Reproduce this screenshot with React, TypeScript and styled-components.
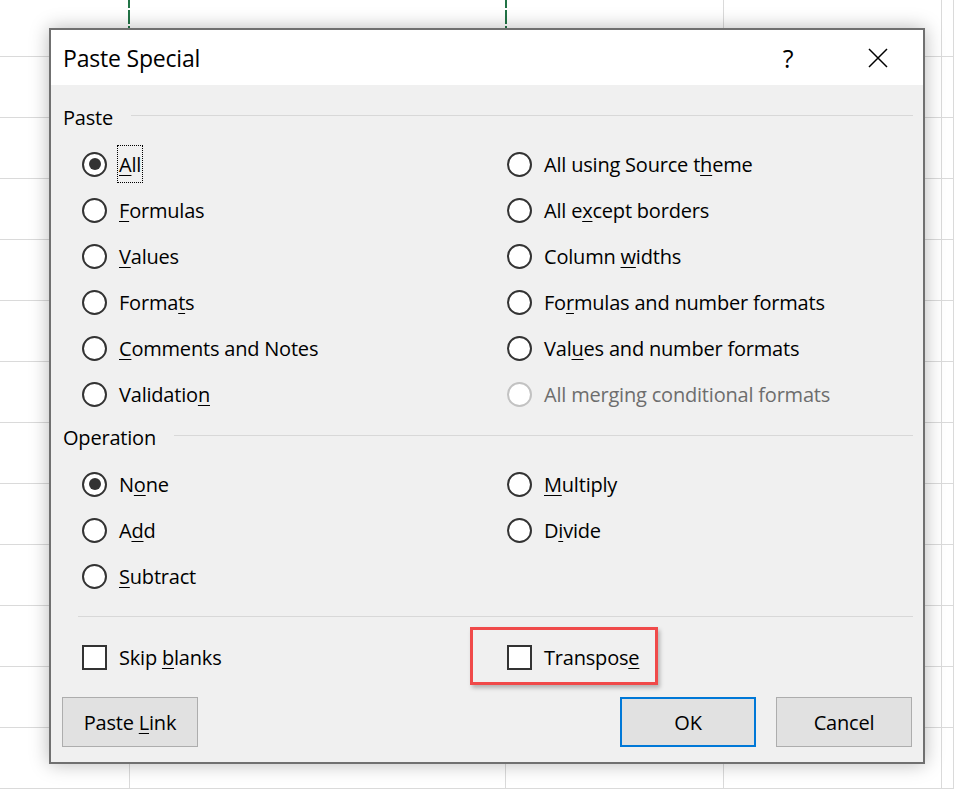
import React from "react";
import styled, { createGlobalStyle } from "styled-components";

const GlobalStyle = createGlobalStyle`
  html, body {
    margin: 0;
    padding: 0;
    background: #fff;
  }
  body {
    font-family: "Open Sans", "Noto Sans", sans-serif;
    letter-spacing: -0.2px;
    color: #000;
  }
`;

// spreadsheet behind the dialog
const Screen = styled.div`
  position: relative;
  width: 954px;
  height: 790px;
  overflow: hidden;
  background: #fff;
`;

const Sheet = styled.div`
  display: grid;
  grid-template-columns: 130px 376px 218px 218px 1fr;
  grid-template-rows: 57px;
  grid-auto-rows: 61px;
`;

const Cell = styled.div`
  box-sizing: border-box;
  border-right: 1px solid #dadada;
  border-bottom: 1px solid #dadada;
`;

const CopyMarquee = styled.div`
  position: absolute;
  left: 128px;
  top: -4px;
  width: 379px;
  height: 320px;
  box-sizing: border-box;
  border-left: 2px solid transparent;
  border-right: 2px solid transparent;
  border-image: repeating-linear-gradient(
      to bottom,
      #217346 0 14px,
      #fff 14px 16px
    )
    2;
`;

// dialog
const Dialog = styled.div`
  position: absolute;
  left: 49px;
  top: 28px;
  width: 876px;
  height: 736px;
  box-sizing: border-box;
  border: 2px solid #707070;
  background: #f0f0f0;
  box-shadow: 0 0 18px rgba(0, 0, 0, 0.28);
  display: flex;
  flex-direction: column;
`;

const TitleBar = styled.div`
  height: 55px;
  flex: none;
  background: #fff;
  display: flex;
  align-items: center;
  padding-left: 12px;
`;

const Title = styled.div`
  font-size: 23px;
  flex: 1;
`;

const TitleButton = styled.div`
  width: 90px;
  height: 55px;
  display: flex;
  align-items: center;
  justify-content: center;
  font-size: 25px;
`;

const Body = styled.div`
  flex: 1;
  display: flex;
  flex-direction: column;
  padding: 18px 10px 16px 12px;
`;

const SectionHeader = styled.div<{ $gapBefore?: number }>`
  height: 28px;
  display: flex;
  align-items: center;
  gap: 18px;
  font-size: 20px;
  margin: ${p => p.$gapBefore ?? 0}px 0 10px;

  &::after {
    content: "";
    flex: 1;
    height: 1px;
    margin-top: -3px;
    background: #d8d8d8;
  }
`;

const OptionGrid = styled.div`
  display: grid;
  grid-template-columns: 425px 1fr;
  grid-auto-rows: 46px;
  margin-left: 19px;
`;

const Option = styled.div<{ $disabled?: boolean }>`
  position: relative;
  display: flex;
  align-items: center;
  gap: 12px;
  font-size: 20px;
  color: ${p => (p.$disabled ? "#6d6d6d" : "#000")};
`;

const RadioCircle = styled.span<{ $checked?: boolean; $disabled?: boolean }>`
  box-sizing: border-box;
  width: 25px;
  height: 25px;
  flex: none;
  border-radius: 50%;
  border: 2px solid ${p => (p.$disabled ? "#c2c2c2" : "#333")};
  background: #fff;
  display: flex;
  align-items: center;
  justify-content: center;

  &::after {
    content: "";
    display: ${p => (p.$checked ? "block" : "none")};
    width: 12px;
    height: 12px;
    border-radius: 50%;
    background: #333;
  }
`;

const CheckBox = styled.span`
  box-sizing: border-box;
  width: 25px;
  height: 25px;
  flex: none;
  border: 2px solid #333;
  background: #fff;
`;

const Label = styled.span<{ $focused?: boolean }>`
  line-height: 28px;
  padding: 5px 1px 3px;
  margin-left: -2px;
  border: 1px dotted ${p => (p.$focused ? "#000" : "transparent")};
`;

const Key = styled.u`
  text-decoration-thickness: 1px;
  text-underline-offset: 3px;
`;

const Separator = styled.div`
  height: 1px;
  background: #d8d8d8;
  margin: 17px 0 17px 15px;
`;

const Highlight = styled.div`
  position: absolute;
  left: -37px;
  top: -7px;
  width: 188px;
  height: 58px;
  box-sizing: border-box;
  border: 3px solid #f04a4a;
  box-shadow: 2px 3px 4px rgba(0, 0, 0, 0.25);
  pointer-events: none;
`;

const ButtonRow = styled.div`
  display: flex;
  gap: 20px;
  margin: 17px 1px 0 -1px;
`;

const Spacer = styled.div`
  flex: 1;
`;

const Button = styled.button<{ $default?: boolean }>`
  width: 136px;
  height: 50px;
  box-sizing: border-box;
  padding: 0;
  background: #e1e1e1;
  border: ${p => (p.$default ? "2px solid #0078d7" : "1px solid #adadad")};
  font-family: inherit;
  letter-spacing: inherit;
  font-size: 20px;
  color: #000;
`;

// "&" marks the access key, as in a Windows resource string
const AccessText = ({ text }: { text: string }) => {
  const i = text.indexOf("&");
  if (i < 0) return <>{text}</>;
  return (
    <>
      {text.slice(0, i)}
      <Key>{text[i + 1]}</Key>
      {text.slice(i + 2)}
    </>
  );
};

type RadioItem = {
  text: string;
  checked?: boolean;
  disabled?: boolean;
  focused?: boolean;
};

const pasteOptions: RadioItem[] = [
  { text: "&All", checked: true, focused: true },
  { text: "All using Source t&heme" },
  { text: "&Formulas" },
  { text: "All e&xcept borders" },
  { text: "&Values" },
  { text: "Column &widths" },
  { text: "Forma&ts" },
  { text: "Fo&rmulas and number formats" },
  { text: "&Comments and Notes" },
  { text: "Val&ues and number formats" },
  { text: "Validatio&n" },
  { text: "All merging conditional formats", disabled: true },
];

const operationOptions: RadioItem[] = [
  { text: "N&one", checked: true },
  { text: "&Multiply" },
  { text: "A&dd" },
  { text: "D&ivide" },
  { text: "&Subtract" },
];

const RadioList = ({ items }: { items: RadioItem[] }) => (
  <OptionGrid>
    {items.map(item => (
      <Option key={item.text} $disabled={item.disabled}>
        <RadioCircle $checked={item.checked} $disabled={item.disabled} />
        <Label $focused={item.focused}>
          <AccessText text={item.text} />
        </Label>
      </Option>
    ))}
  </OptionGrid>
);

const CloseIcon = () => (
  <svg width="20" height="20" viewBox="0 0 20 20">
    <path d="M1 1 L19 19 M19 1 L1 19" stroke="#000" strokeWidth="1.5" fill="none" />
  </svg>
);

const App = () => {
  const cells = Array.from({ length: 13 * 5 });

  return (
    <>
      <GlobalStyle />
      <Screen>
        <Sheet>
          {cells.map((_, i) => (
            <Cell key={i} />
          ))}
        </Sheet>
        <CopyMarquee />

        <Dialog>
          <TitleBar>
            <Title>Paste Special</Title>
            <TitleButton>?</TitleButton>
            <TitleButton>
              <CloseIcon />
            </TitleButton>
          </TitleBar>

          <Body>
            <SectionHeader>Paste</SectionHeader>
            <RadioList items={pasteOptions} />

            <SectionHeader $gapBefore={6}>Operation</SectionHeader>
            <RadioList items={operationOptions} />

            <Separator />

            <OptionGrid>
              <Option>
                <CheckBox />
                <Label>
                  <AccessText text="Skip &blanks" />
                </Label>
              </Option>
              <Option>
                <CheckBox />
                <Label>
                  <AccessText text="Transpos&e" />
                </Label>
                <Highlight />
              </Option>
            </OptionGrid>

            <ButtonRow>
              <Button>
                <AccessText text="Paste &Link" />
              </Button>
              <Spacer />
              <Button $default>OK</Button>
              <Button>Cancel</Button>
            </ButtonRow>
          </Body>
        </Dialog>
      </Screen>
    </>
  );
};

export default App;
